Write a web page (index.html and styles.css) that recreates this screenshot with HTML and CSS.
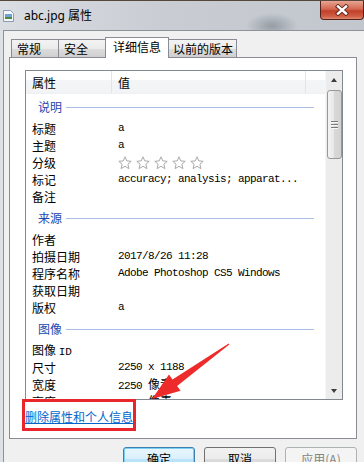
FILE: index.html
```html
<!DOCTYPE html>
<html>
<head>
<meta charset="utf-8">
<link rel="stylesheet" href="styles.css">
</head>
<body>
<div class="win">
  <div class="titlebar">
    <svg class="ticon" width="11" height="12" viewBox="0 0 11 12">
      <path d="M0.5 0.5 H7.5 L10.5 3.5 V11.5 H0.5 Z" fill="#f4f8fc" stroke="#8a9bb3"/>
      <rect x="2" y="4" width="7" height="5" fill="#6fa3d8"/>
      <rect x="2" y="7" width="7" height="2" fill="#4f8a3c"/>
    </svg>
    <span class="title">abc.jpg 属性</span>
    <div class="close">
      <svg width="14" height="12" viewBox="-7 -6 14 12">
        <path d="M-4 -3.5 L4 3.5 M4 -3.5 L-4 3.5" stroke="#5b2419" stroke-width="4.2" stroke-linecap="square"/>
        <path d="M-4 -3.5 L4 3.5 M4 -3.5 L-4 3.5" stroke="#ffffff" stroke-width="2.4" stroke-linecap="square"/>
      </svg>
    </div>
  </div>
  <div class="client">
    <div class="tabs">
      <div class="tab t1">常规</div>
      <div class="tab t2">安全</div>
      <div class="tab active">详细信息</div>
      <div class="tab t4">以前的版本</div>
    </div>
    <div class="panel">
      <div class="list">
        <div class="main">
          <div class="hdr">
            <div class="hc hc1">属性</div>
            <div class="hc hc2">值</div>
            <div class="hc hc3"></div>
          </div>
          <div class="grp"><span>说明</span><i class="gline"></i></div>
          <div class="row"><span class="k">标题</span><span class="v">a</span></div>
          <div class="row"><span class="k">主题</span><span class="v">a</span></div>
          <div class="row"><span class="k">分级</span>
            <span class="stars">
              <svg class="star" viewBox="0 0 14 14"><path d="M7 0.8 L8.8 4.9 L13.2 5.3 L9.9 8.2 L10.9 12.6 L7 10.3 L3.1 12.6 L4.1 8.2 L0.8 5.3 L5.2 4.9 Z"/></svg>
              <svg class="star" viewBox="0 0 14 14"><path d="M7 0.8 L8.8 4.9 L13.2 5.3 L9.9 8.2 L10.9 12.6 L7 10.3 L3.1 12.6 L4.1 8.2 L0.8 5.3 L5.2 4.9 Z"/></svg>
              <svg class="star" viewBox="0 0 14 14"><path d="M7 0.8 L8.8 4.9 L13.2 5.3 L9.9 8.2 L10.9 12.6 L7 10.3 L3.1 12.6 L4.1 8.2 L0.8 5.3 L5.2 4.9 Z"/></svg>
              <svg class="star" viewBox="0 0 14 14"><path d="M7 0.8 L8.8 4.9 L13.2 5.3 L9.9 8.2 L10.9 12.6 L7 10.3 L3.1 12.6 L4.1 8.2 L0.8 5.3 L5.2 4.9 Z"/></svg>
              <svg class="star" viewBox="0 0 14 14"><path d="M7 0.8 L8.8 4.9 L13.2 5.3 L9.9 8.2 L10.9 12.6 L7 10.3 L3.1 12.6 L4.1 8.2 L0.8 5.3 L5.2 4.9 Z"/></svg>
            </span>
          </div>
          <div class="row"><span class="k">标记</span><span class="v">accuracy; analysis; apparat...</span></div>
          <div class="row"><span class="k">备注</span><span class="v"></span></div>
          <div class="grp"><span>来源</span><i class="gline"></i></div>
          <div class="row"><span class="k">作者</span><span class="v"></span></div>
          <div class="row"><span class="k">拍摄日期</span><span class="v">2017/8/26 11:28</span></div>
          <div class="row"><span class="k">程序名称</span><span class="v">Adobe Photoshop CS5 Windows</span></div>
          <div class="row"><span class="k">获取日期</span><span class="v"></span></div>
          <div class="row"><span class="k">版权</span><span class="v">a</span></div>
          <div class="grp"><span>图像</span><i class="gline"></i></div>
          <div class="row"><span class="k">图像 <span class="kid">ID</span></span><span class="v"></span></div>
          <div class="row"><span class="k">尺寸</span><span class="v">2250 x 1188</span></div>
          <div class="row"><span class="k">宽度</span><span class="v">2250 <span class="cj">像素</span></span></div>
          <div class="row"><span class="k">高度</span><span class="v">1188 <span class="cj">像素</span></span></div>
        </div>
        <div class="sb">
          <div class="sbtn"><i class="tri-up"></i></div>
          <div class="thumb"><i class="grip"></i><i class="grip"></i><i class="grip"></i></div>
          <div class="track"></div>
          <div class="sbtn"><i class="tri-down"></i></div>
        </div>
      </div>
      <div class="linkrow"><a class="link" href="#">删除属性和个人信息</a></div>
    </div>
    <div class="buttons">
      <div class="btn def">确定</div>
      <div class="btn">取消</div>
      <div class="btn dis">应用(A)</div>
    </div>
  </div>
  <div class="redbox"></div>
  <svg class="arrow" width="364" height="462" viewBox="0 0 364 462">
    <polygon points="229.3,344.4 177.1,386.0 180.6,390.8 152,399 169.0,374.6 172.5,379.4 228.7,343.6" fill="#ee2b2b"/>
  </svg>
</div>
</body>
</html>
```

FILE: styles.css
```css
html, body {
  margin: 0;
  padding: 0;
}
body {
  width: 364px;
  height: 462px;
  overflow: hidden;
  font-family: "Noto Sans CJK SC", "Noto Sans", sans-serif;
  font-size: 12px;
  color: #000;
  background: #f0f0f0;
}
.win {
  position: relative;
  width: 364px;
  height: 462px;
  display: flex;
  flex-direction: column;
  background: #dde1e5;
  overflow: hidden;
}
.titlebar {
  height: 30px;
  flex: none;
  box-sizing: border-box;
  border-top: 1px solid #55473b;
  display: flex;
  align-items: center;
  background:
    radial-gradient(ellipse 26px 13px at 272px 25px, rgba(118,126,136,0.6), rgba(118,126,136,0)),
    linear-gradient(to right, #dadde2, #c9cdd3 45%, #c2c7cd);
}
.ticon {
  margin-left: 3px;
  flex: none;
}
.title {
  margin-left: 10px;
  font-family: "Noto Sans", "Noto Sans CJK SC", sans-serif;
  font-size: 12px;
  line-height: 14px;
  color: #000;
  padding-top: 1px;
}
.close {
  margin-left: auto;
  align-self: flex-start;
  width: 44px;
  height: 19px;
  box-sizing: border-box;
  border: 1px solid #54221a;
  border-top: none;
  border-radius: 0 0 4px 4px;
  background: linear-gradient(#e7a593, #d4674f 45%, #c2402a 55%, #cf5d44 85%, #e08a70);
  display: flex;
  align-items: center;
  justify-content: center;
}
.client {
  flex: 1;
  margin-left: 3px;
  border-left: 1px solid #8e939a;
  border-top: 1px solid #8e939a;
  background: #f0f0f0;
  display: flex;
  flex-direction: column;
}
.tabs {
  display: flex;
  align-items: flex-end;
  margin-top: 6px;
  padding-left: 7px;
  height: 20px;
  position: relative;
  z-index: 1;
}
.tab {
  height: 18px;
  box-sizing: border-box;
  border: 1px solid #898c95;
  border-bottom: none;
  margin-right: -1px;
  padding-left: 5px;
  line-height: 17px;
  background: linear-gradient(#f3f3f3, #ebebeb 50%, #dddddd 50%, #d0d0d0);
  white-space: nowrap;
}
.t1, .t2 { width: 48px; }
.t4 { width: 69px; padding-left: 4px; }
.tab.active {
  width: 64px;
  height: 21px;
  margin-bottom: -1px;
  padding-left: 7px;
  line-height: 18px;
  background: #fff;
  position: relative;
  z-index: 2;
}
.panel {
  margin-left: 5px;
  width: 348px;
  height: 382px;
  box-sizing: border-box;
  border: 1px solid #898c95;
  background: #fff;
  display: flex;
  flex-direction: column;
  flex: none;
}
.list {
  margin: 12px 0 0 15px;
  width: 318px;
  height: 330px;
  box-sizing: border-box;
  border: 1px solid #828790;
  display: flex;
  flex: none;
}
.main {
  flex: 1;
  overflow: hidden;
  display: flex;
  flex-direction: column;
}
.hdr {
  height: 23px;
  flex: none;
  display: flex;
  background: linear-gradient(#ffffff, #ffffff 40%, #f4f5f7 40%, #f2f3f5);
  border-bottom: 1px solid #eef0f3;
  box-sizing: border-box;
}
.hc {
  padding: 3px 0 0 6px;
  line-height: 18px;
  box-sizing: border-box;
}
.hc1 { width: 86px; border-right: 1px solid #e2e4e8; }
.hc2 { width: 194px; border-right: 1px solid #e2e4e8; }
.hc3 { flex: 1; }
.grp {
  height: 26px;
  flex: none;
  display: flex;
  align-items: center;
  padding-left: 12px;
  color: #2446ae;
  line-height: 16px;
}
.gline {
  flex: 1;
  height: 1px;
  margin: 1px 11px 0 4px;
  background: #a9bde5;
}
.row {
  height: 17px;
  flex: none;
  display: flex;
  align-items: center;
  line-height: 17px;
}
.k {
  width: 92px;
  padding-left: 6px;
  box-sizing: border-box;
  flex: none;
}
.kid {
  font-family: "Liberation Mono", monospace;
  font-size: 11px;
}
.v {
  font-family: "Liberation Mono", "Noto Sans CJK SC", monospace;
  font-size: 11px;
  letter-spacing: -0.6px;
  white-space: nowrap;
}
.cj {
  font-family: "Noto Sans CJK SC", sans-serif;
  font-size: 12px;
  letter-spacing: 0;
}
.stars {
  display: flex;
  align-items: center;
}
.star {
  width: 14px;
  height: 14px;
  margin-right: 4px;
  fill: #ffffff;
  stroke: #a9a9a9;
  stroke-width: 1;
}
.sb {
  width: 17px;
  flex: none;
  display: flex;
  flex-direction: column;
  align-items: center;
  background: #ececec;
  border-left: 1px solid #f6f6f6;
  box-sizing: border-box;
}
.sbtn {
  height: 17px;
  width: 100%;
  flex: none;
  display: flex;
  align-items: center;
  justify-content: center;
}
.tri-up {
  width: 0;
  height: 0;
  border-left: 3.5px solid transparent;
  border-right: 3.5px solid transparent;
  border-bottom: 4px solid #3c3c3c;
}
.tri-down {
  width: 0;
  height: 0;
  border-left: 3.5px solid transparent;
  border-right: 3.5px solid transparent;
  border-top: 4px solid #3c3c3c;
}
.thumb {
  margin-top: 2px;
  width: 15px;
  height: 69px;
  box-sizing: border-box;
  border: 1px solid #989898;
  border-radius: 3px;
  background: linear-gradient(to right, #f4f4f4, #e6e6e6 50%, #d8d8d8 50%, #d2d2d2);
  display: flex;
  flex-direction: column;
  align-items: center;
  justify-content: center;
  gap: 1px;
  flex: none;
}
.grip {
  display: block;
  width: 7px;
  height: 1px;
  background: #7a7a7a;
  border-bottom: 1px solid #f8f8f8;
}
.track { flex: 1; }
.linkrow {
  margin: 9px 0 0 15px;
  line-height: 16px;
}
.link {
  color: #0066cc;
  text-decoration: underline;
}
.buttons {
  display: flex;
  justify-content: flex-end;
  gap: 9px;
  margin-top: 8px;
  padding-right: 7px;
}
.btn {
  width: 72px;
  height: 23px;
  box-sizing: border-box;
  border: 1px solid #707070;
  border-radius: 3px;
  background: linear-gradient(#f2f2f2, #ebebeb 50%, #dddddd 50%, #cfcfcf);
  text-align: center;
  line-height: 21px;
}
.btn.def {
  border-color: #3c7fb1;
  box-shadow: inset 0 0 0 1px #7ad0f2;
  background: linear-gradient(#eaf6fd, #d9f0fc 50%, #bee6fd 50%, #a7d9f5);
}
.btn.dis {
  border-color: #adb2b5;
  background: #f4f4f4;
  color: #838383;
}
.redbox {
  position: absolute;
  left: 22px;
  top: 399px;
  width: 114px;
  height: 32px;
  box-sizing: border-box;
  border: 3px solid #e8262b;
}
.arrow {
  position: absolute;
  left: 0;
  top: 0;
  pointer-events: none;
}
```
